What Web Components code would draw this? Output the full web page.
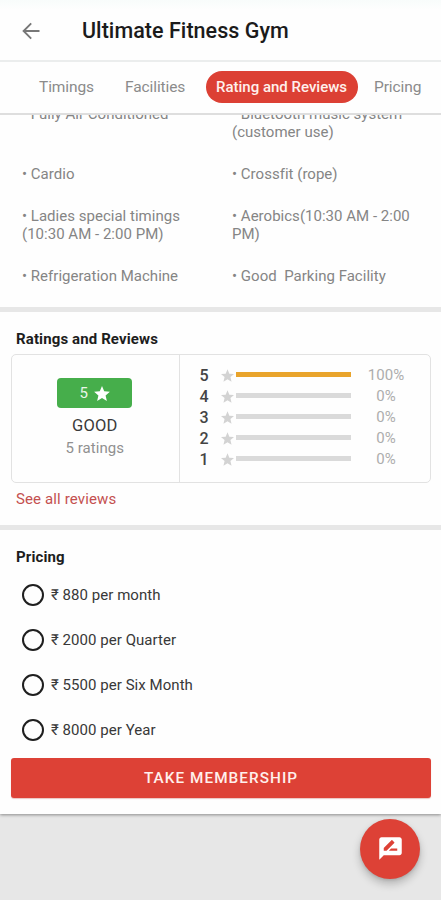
<!DOCTYPE html>
<html lang="en">
<head>
<meta charset="utf-8">
<meta name="viewport" content="width=device-width, initial-scale=1">
<title>Ultimate Fitness Gym</title>
<style>
  body {
    margin: 0;
    background: #e7e7e7;
    font-family: Roboto, "Liberation Sans", sans-serif;
    overflow: hidden;
  }
</style>
</head>
<body>
<gym-page></gym-page>

<script>
class GymHeader extends HTMLElement {
  constructor() {
    super();
    this.attachShadow({ mode: 'open' });
  }

  connectedCallback() {
    this.shadowRoot.innerHTML = `
      <style>
        :host {
          display: flex;
          align-items: center;
          box-sizing: border-box;
          height: 62px;
          padding: 1px 0 0 22px;
          border-bottom: 2px solid #ebeded;
          background: linear-gradient(#f8fcfb, #fefefe 10px);
        }
        svg { display: block; width: 18px; height: 18px; }
        h1 {
          margin: 0 0 0 42px;
          font-size: 21.5px;
          font-weight: 500;
          line-height: 30px;
          letter-spacing: 0.05px;
          color: #1b1b1b;
          white-space: nowrap;
        }
      </style>
      <svg viewBox="0 0 18 18" fill="none" stroke="#777" stroke-width="1.9">
        <path d="M17.5 9H1.8M9.2 1.4L1.6 9l7.6 7.6"/>
      </svg>
      <h1><slot></slot></h1>
    `;
  }
}

class GymTab extends HTMLElement {
  constructor() {
    super();
    this.attachShadow({ mode: 'open' });
  }

  connectedCallback() {
    this.shadowRoot.innerHTML = `
      <style>
        :host {
          display: block;
          box-sizing: border-box;
          height: 32px;
          border-radius: 16px;
          font-size: 15.5px;
          line-height: 33px;
          letter-spacing: -0.1px;
          color: #8b8b8b;
          white-space: nowrap;
        }
        :host([active]) {
          width: 152px;
          background: #dc4034;
          color: #fff0ec;
          font-weight: 500;
          font-size: 15px;
          letter-spacing: 0;
          text-align: center;
        }
      </style>
      <slot></slot>
    `;
  }
}

class GymTabs extends HTMLElement {
  constructor() {
    super();
    this.attachShadow({ mode: 'open' });
  }

  connectedCallback() {
    this.shadowRoot.innerHTML = `
      <style>
        :host {
          display: grid;
          grid-template-columns: 86px 80.5px 168.5px auto;
          align-items: center;
          box-sizing: border-box;
          height: 53px;
          padding: 0 0 1px 39px;
          border-bottom: 2px solid #dedede;
          background: #fefefe;
          overflow: hidden;
        }
      </style>
      <slot></slot>
    `;
  }
}

class FacilityList extends HTMLElement {
  constructor() {
    super();
    this.attachShadow({ mode: 'open' });
  }

  connectedCallback() {
    // Scrolled a little, so the first row sits partly under the tabs
    this.shadowRoot.innerHTML = `
      <style>
        :host {
          display: block;
          height: 192px;
          overflow: hidden;
        }
        .grid {
          display: grid;
          grid-template-columns: 210px 192px;
          row-gap: 24.6px;
          margin-top: -8.6px;
          padding-left: 22px;
          font-size: 15px;
          line-height: 17.6px;
          letter-spacing: 0.02px;
          color: #858585;
        }
      </style>
      <div class="grid"><slot></slot></div>
    `;
  }
}

class GymSection extends HTMLElement {
  constructor() {
    super();
    this.attachShadow({ mode: 'open' });
  }

  connectedCallback() {
    this.shadowRoot.innerHTML = `
      <style>
        :host {
          display: block;
          box-sizing: border-box;
          border-top: 5px solid #e7e7e7;
          padding: 17px 10px 0 11px;
        }
        h2 {
          margin: 0 0 5px 5px;
          font-size: 15px;
          font-weight: 700;
          line-height: 20px;
          letter-spacing: 0.12px;
          color: #1d1d1d;
        }
      </style>
      <h2>${this.getAttribute('heading')}</h2>
      <slot></slot>
    `;
  }
}

class RatingRow extends HTMLElement {
  constructor() {
    super();
    this.attachShadow({ mode: 'open' });
  }

  connectedCallback() {
    const percent = Number(this.getAttribute('percent'));
    this.shadowRoot.innerHTML = `
      <style>
        :host {
          display: grid;
          grid-template-columns: 12px 10px 13px 2px 115px 70px;
          align-items: center;
          height: 21px;
          line-height: 21px;
        }
        .stars {
          margin-left: -2px;
          font-size: 16px;
          font-weight: 500;
          color: #444;
          text-align: center;
        }
        svg { grid-column: 3; display: block; width: 13px; height: 13px; }
        .track { grid-column: 5; height: 5px; margin-bottom: 2px; background: #dadada; }
        .fill { height: 5px; width: ${percent}%; background: #e9a42c; }
        .percent { font-size: 15px; color: #adadad; text-align: center; }
      </style>
      <span class="stars">${this.getAttribute('stars')}</span>
      <svg viewBox="2 2 20 19" fill="#d3d3d3">
        <path d="M12 17.27L18.18 21l-1.64-7.03L22 9.24l-7.19-.61L12 2 9.19 8.63 2 9.24l5.46 4.73L5.82 21z"/>
      </svg>
      <div class="track"><div class="fill"></div></div>
      <span class="percent">${percent}%</span>
    `;
  }
}

class RatingCard extends HTMLElement {
  constructor() {
    super();
    this.attachShadow({ mode: 'open' });
  }

  connectedCallback() {
    this.shadowRoot.innerHTML = `
      <style>
        :host {
          display: flex;
          box-sizing: border-box;
          height: 129px;
          border: 1.5px solid #e2e2e2;
          border-radius: 5px;
        }
        .score {
          display: flex;
          flex-direction: column;
          align-items: center;
          box-sizing: border-box;
          width: 168px;
          padding: 23px 1.5px 0 0;
          border-right: 1.5px solid #e2e2e2;
        }
        .badge {
          display: flex;
          align-items: center;
          justify-content: center;
          gap: 6px;
          width: 75px;
          height: 30px;
          border-radius: 4px;
          background: #46ae4b;
          color: #e9f6e9;
          font-size: 15px;
        }
        svg { display: block; width: 16px; height: 15px; }
        .label { margin-top: 7px; font-size: 16.5px; line-height: 22px; letter-spacing: 0.2px; color: #3a3a3a; }
        .count { font-size: 15px; line-height: 22px; letter-spacing: 0.05px; color: #909090; }
        .rows { padding: 10px 0 0 19px; }
      </style>
      <div class="score">
        <div class="badge">
          <span>5</span>
          <svg viewBox="2 2 20 19" fill="#fff">
            <path d="M12 17.27L18.18 21l-1.64-7.03L22 9.24l-7.19-.61L12 2 9.19 8.63 2 9.24l5.46 4.73L5.82 21z"/>
          </svg>
        </div>
        <span class="label">GOOD</span>
        <span class="count">5 ratings</span>
      </div>
      <div class="rows"><slot></slot></div>
    `;
  }
}

class PriceOption extends HTMLElement {
  constructor() {
    super();
    this.attachShadow({ mode: 'open' });
  }

  connectedCallback() {
    this.shadowRoot.innerHTML = `
      <style>
        :host {
          display: flex;
          align-items: center;
          gap: 7px;
          height: 45px;
          padding-left: 11px;
          font-size: 15px;
          letter-spacing: 0.05px;
          color: #383838;
        }
        .circle {
          box-sizing: border-box;
          width: 22px;
          height: 22px;
          border: 2.4px solid #1f1f1f;
          border-radius: 50%;
        }
        .text { padding-top: 1px; }
      </style>
      <span class="circle"></span>
      <span class="text"><slot></slot></span>
    `;
  }
}

class PrimaryButton extends HTMLElement {
  constructor() {
    super();
    this.attachShadow({ mode: 'open' });
  }

  connectedCallback() {
    this.shadowRoot.innerHTML = `
      <style>
        :host { display: block; }
        button {
          display: block;
          width: 100%;
          height: 40px;
          padding: 0;
          border: none;
          border-radius: 3px;
          background: #dd4136;
          color: #fff0ec;
          font: 500 15.3px/41px Roboto, sans-serif;
          letter-spacing: 1.05px;
          box-shadow: 0 1px 1px rgba(190, 60, 50, 0.3);
        }
      </style>
      <button type="button"><slot></slot></button>
    `;
  }
}

class ReviewFab extends HTMLElement {
  constructor() {
    super();
    this.attachShadow({ mode: 'open' });
  }

  connectedCallback() {
    this.shadowRoot.innerHTML = `
      <style>
        :host {
          position: absolute;
          right: 21px;
          bottom: 21px;
          display: flex;
          align-items: center;
          justify-content: center;
          width: 60px;
          height: 60px;
          border-radius: 50%;
          background: #dd4136;
          box-shadow: 0 5px 8px rgba(0, 0, 0, 0.22), 0 1px 3px rgba(0, 0, 0, 0.12);
        }
        svg { display: block; width: 27px; height: 27px; margin-top: -2px; }
      </style>
      <svg viewBox="0 0 24 24" fill="#fff">
        <path d="M20 2H4c-1.1 0-2 .9-2 2v18l4-4h14c1.1 0 2-.9 2-2V4c0-1.1-.9-2-2-2zM6 14v-2.47l6.88-6.88c.2-.2.51-.2.71 0l1.77 1.77c.2.2.2.51 0 .71L8.47 14H6zm12 0h-7.5l2-2H18v2z"/>
      </svg>
    `;
  }
}

class GymPage extends HTMLElement {
  constructor() {
    super();
    this.attachShadow({ mode: 'open' });
  }

  connectedCallback() {
    this.shadowRoot.innerHTML = `
      <style>
        :host {
          display: block;
          position: relative;
          width: 441px;
          height: 900px;
          overflow: hidden;
        }
        main {
          height: 814px;
          background: #fefefe;
          box-shadow: 0 1px 3px rgba(0, 0, 0, 0.4);
        }
        .ratings { height: 218px; }
        .see-all {
          display: block;
          margin: 6px 0 0 5px;
          font-size: 15px;
          line-height: 20px;
          letter-spacing: 0.13px;
          color: #c4504f;
          text-decoration: none;
        }
        primary-button { margin-top: 6px; }
        .wide { white-space: pre-wrap; }
      </style>
      <main>
        <gym-header>Ultimate Fitness Gym</gym-header>
        <gym-tabs>
          <gym-tab>Timings</gym-tab>
          <gym-tab>Facilities</gym-tab>
          <gym-tab active>Rating and Reviews</gym-tab>
          <gym-tab>Pricing</gym-tab>
        </gym-tabs>
        <facility-list>
          <div>• Fully Air Conditioned</div>
          <div>• Bluetooth music system<br>(customer use)</div>
          <div>• Cardio</div>
          <div>• Crossfit (rope)</div>
          <div>• Ladies special timings<br>(10:30 AM - 2:00 PM)</div>
          <div>• Aerobics(10:30 AM - 2:00<br>PM)</div>
          <div>• Refrigeration Machine</div>
          <div class="wide">• Good  Parking Facility</div>
        </facility-list>
        <gym-section class="ratings" heading="Ratings and Reviews">
          <rating-card>
            <rating-row stars="5" percent="100"></rating-row>
            <rating-row stars="4" percent="0"></rating-row>
            <rating-row stars="3" percent="0"></rating-row>
            <rating-row stars="2" percent="0"></rating-row>
            <rating-row stars="1" percent="0"></rating-row>
          </rating-card>
          <a class="see-all">See all reviews</a>
        </gym-section>
        <gym-section heading="Pricing">
          <price-option>₹ 880 per month</price-option>
          <price-option>₹ 2000 per Quarter</price-option>
          <price-option>₹ 5500 per Six Month</price-option>
          <price-option>₹ 8000 per Year</price-option>
          <primary-button>TAKE MEMBERSHIP</primary-button>
        </gym-section>
      </main>
      <review-fab></review-fab>
    `;
  }
}

customElements.define('gym-header', GymHeader);
customElements.define('gym-tab', GymTab);
customElements.define('gym-tabs', GymTabs);
customElements.define('facility-list', FacilityList);
customElements.define('gym-section', GymSection);
customElements.define('rating-row', RatingRow);
customElements.define('rating-card', RatingCard);
customElements.define('price-option', PriceOption);
customElements.define('primary-button', PrimaryButton);
customElements.define('review-fab', ReviewFab);
customElements.define('gym-page', GymPage);
</script>
</body>
</html>
